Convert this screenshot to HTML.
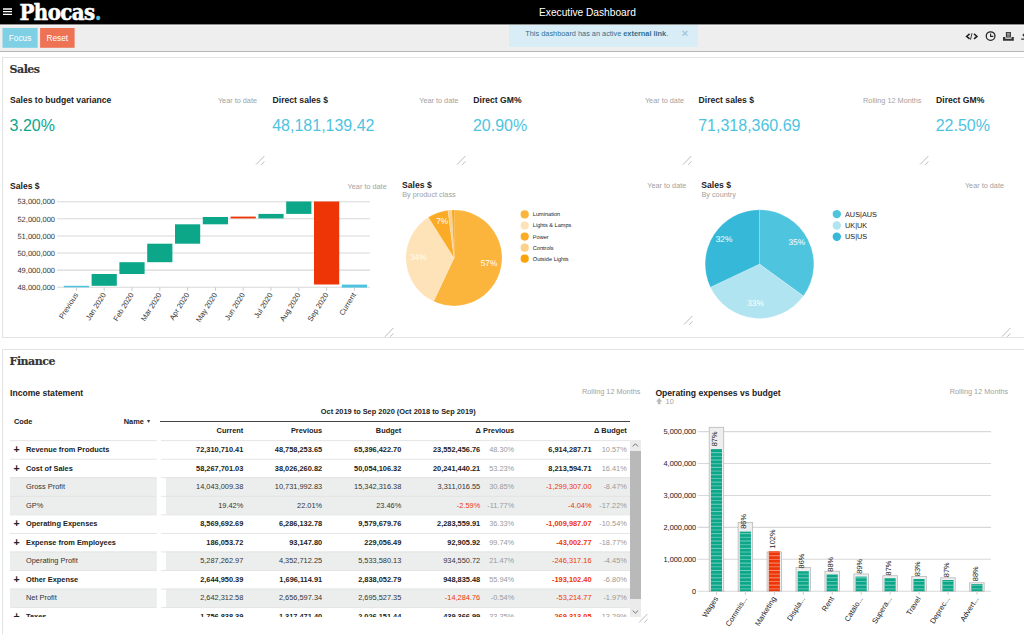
<!DOCTYPE html>
<html><head><meta charset="utf-8"><title>Executive Dashboard</title>
<style>
*{box-sizing:border-box;margin:0;padding:0}
html,body{width:1024px;height:634px;overflow:hidden;background:#fff;font-family:"Liberation Sans",sans-serif;color:#333}
.abs{position:absolute;white-space:nowrap}
#hdr{left:0;top:0;width:1024px;height:24px;background:#000}
#logo{left:19.5px;top:-4.5px;font:bold 22px "DejaVu Serif Condensed","DejaVu Serif",serif;color:#fff;letter-spacing:-0.55px;line-height:32px;font-stretch:condensed;-webkit-text-stroke:0.55px #fff}
#logo span{color:#4ec3e0;-webkit-text-stroke:0.3px #4ec3e0}
#title{left:539px;top:7px;font-size:10.2px;color:#fff}
#tb{left:0;top:24px;width:1024px;height:28px;background:#eee;border-bottom:1px solid #b5b5b5}
.btn{top:28px;height:20px;color:#fff;font-size:8.3px;line-height:20px;text-align:center}
#alert{left:509px;top:25px;width:188.7px;height:22.4px;background:#d9edf7;color:#31708f;font-size:7.35px;line-height:17px;padding-left:16.3px}
.panel{left:2px;width:1030px;border:1px solid #e2e2e2;background:#fff}
.h{font:bold 11px "DejaVu Serif",serif;color:#333;letter-spacing:-0.5px;-webkit-text-stroke:0.15px #333;line-height:14px}
.t{font-weight:bold;font-size:8.6px;color:#222;margin-left:-0.4px}
.p{font-size:7.3px;color:#a2a2a2}
.v{font-size:16px}
.sub{font-size:7.3px;color:#a2a2a2}
svg{position:absolute;overflow:visible}
svg text{font-family:"Liberation Sans",sans-serif;text-rendering:geometricPrecision}
.tbl{font-size:7.4px;color:#333}
.tbl b{color:#222}
.r{text-align:right}
.red,.red b{color:#ee3506!important}
.g{color:#999}
</style></head><body>
<div class="abs" id="hdr"></div>
<svg style="left:3px;top:8px" width="10" height="8"><path d="M0 1h9M0 3.7h9M0 6.4h9" stroke="#fff" stroke-width="1.3"/></svg>
<div class="abs" id="logo">Phocas<span>.</span></div>
<div class="abs" id="title">Executive Dashboard</div>
<div class="abs" id="tb"></div>
<div class="abs" style="left:0;top:24px;width:1024px;height:1px;background:#8e8e8e"></div><div class="abs" style="left:0;top:25px;width:1024px;height:1px;background:#f6f6f6"></div>
<svg style="left:0;top:0" width="80" height="52"><rect x="2.5" y="28" width="35.1" height="19.8" fill="#7fd0e4"/><rect x="40.1" y="28" width="34.5" height="19.8" fill="#ee7355"/></svg>
<div class="abs btn" style="left:2.5px;width:35px">Focus</div>
<div class="abs btn" style="left:40px;width:34.5px">Reset</div>
<div class="abs" id="alert">This dashboard has an active <b>external link</b>.</div>
<div class="abs" style="left:681.6px;top:26.6px;font-size:11.5px;font-weight:bold;color:#a3c8de">×</div>

<svg style="left:964px;top:31px" width="60" height="12">
<g fill="none" stroke="#222"><path d="M5.6 2.9L2.6 5.4l3 2.5M10 2.9l3 2.5-3 2.5" stroke-width="1.5"/><path d="M8 2.2L6.5 8.7" stroke-width="0.9"/></g>
<circle cx="26.6" cy="5.1" r="4.35" fill="none" stroke="#222" stroke-width="1.25"/><path d="M26.6 2.4v3h2.7" fill="none" stroke="#222" stroke-width="1.1"/>
<path d="M41.9 0.9h5v5.6h-5zM39 6.1h2.3v1.6h6.2v-1.6h2.3v3.6h-10.8z" fill="#333"/><path d="M42.9 2.3h3M42.9 3.7h3M42.9 5.1h3" stroke="#ddd" stroke-width="0.7"/>
<path d="M58.6 4a1.6 1.6 0 1 1 3.2 0a1.6 1.6 0 1 1-3.2 0M57.2 7.6h4v1.2h-4z" fill="#333"/>
</svg>

<div class="abs panel" style="top:57px;height:281px"></div>
<div class="abs panel" style="top:349px;height:300px"></div>
<div class="abs h" style="left:9.6px;top:62.5px">Sales</div>
<div class="abs h" style="left:9.6px;top:355px">Finance</div>

<div class="abs t" style="left:10.4px;top:95px">Sales to budget variance</div>
<div class="abs p" style="right:767px;top:95.8px">Year to date</div>
<div class="abs v" style="left:9.6px;top:117px;color:#0ca789">3.20%</div>
<div class="abs t" style="left:273px;top:95px">Direct sales $</div>
<div class="abs p" style="right:565.7px;top:95.8px">Year to date</div>
<div class="abs v" style="left:272.2px;top:117px;color:#4ec3e0">48,181,139.42</div>
<div class="abs t" style="left:473.7px;top:95px">Direct GM%</div>
<div class="abs p" style="right:340px;top:95.8px">Year to date</div>
<div class="abs v" style="left:472.9px;top:117px;color:#4ec3e0">20.90%</div>
<div class="abs t" style="left:699px;top:95px">Direct sales $</div>
<div class="abs p" style="right:102.5px;top:95.8px">Rolling 12 Months</div>
<div class="abs v" style="left:698.2px;top:117px;color:#4ec3e0">71,318,360.69</div>
<div class="abs t" style="left:936.5px;top:95px">Direct GM%</div>
<div class="abs v" style="left:935.7px;top:117px;color:#4ec3e0">22.50%</div>
<svg style="left:255.5px;top:155.7px" width="9" height="9"><path d="M0 8.6L8.4 0M5.2 8.8L8.4 5.4" stroke="#b4b4b4" stroke-width="0.9" fill="none"/></svg>
<svg style="left:456.8px;top:155.7px" width="9" height="9"><path d="M0 8.6L8.4 0M5.2 8.8L8.4 5.4" stroke="#b4b4b4" stroke-width="0.9" fill="none"/></svg>
<svg style="left:682.6px;top:155.7px" width="9" height="9"><path d="M0 8.6L8.4 0M5.2 8.8L8.4 5.4" stroke="#b4b4b4" stroke-width="0.9" fill="none"/></svg>
<svg style="left:920px;top:155.7px" width="9" height="9"><path d="M0 8.6L8.4 0M5.2 8.8L8.4 5.4" stroke="#b4b4b4" stroke-width="0.9" fill="none"/></svg>
<svg style="left:385.1px;top:328.2px" width="9" height="9"><path d="M0 8.6L8.4 0M5.2 8.8L8.4 5.4" stroke="#b4b4b4" stroke-width="0.9" fill="none"/></svg>
<svg style="left:684.4px;top:316px" width="9" height="9"><path d="M0 8.6L8.4 0M5.2 8.8L8.4 5.4" stroke="#b4b4b4" stroke-width="0.9" fill="none"/></svg>
<svg style="left:1002.3px;top:328.3px" width="9" height="9"><path d="M0 8.6L8.4 0M5.2 8.8L8.4 5.4" stroke="#b4b4b4" stroke-width="0.9" fill="none"/></svg>
<svg style="left:638.9px;top:614.2px" width="9" height="9"><path d="M0 8.6L8.4 0M5.2 8.8L8.4 5.4" stroke="#b4b4b4" stroke-width="0.9" fill="none"/></svg>
<div class="abs t" style="left:10.4px;top:180.8px">Sales $</div>
<div class="abs p" style="right:637.3px;top:181.9px">Year to date</div>
<div class="abs t" style="left:402.5px;top:180.3px">Sales $</div>
<div class="abs sub" style="left:402.2px;top:189.9px">By product class</div>
<div class="abs p" style="right:337.70000000000005px;top:181.4px">Year to date</div>
<div class="abs t" style="left:701.7px;top:180.3px">Sales $</div>
<div class="abs sub" style="left:701.4000000000001px;top:189.9px">By country</div>
<div class="abs p" style="right:20px;top:181.4px">Year to date</div>
<svg style="left:0;top:0" width="1024" height="634">
<path d="M57 201.70H370" stroke="#d8d8d8" stroke-width="1.05"/>
<text x="55" y="204.40" font-size="7.5" text-anchor="end" fill="#333">53,000,000</text>
<path d="M57 218.80H370" stroke="#d8d8d8" stroke-width="1.05"/>
<text x="55" y="221.50" font-size="7.5" text-anchor="end" fill="#333">52,000,000</text>
<path d="M57 235.90H370" stroke="#d8d8d8" stroke-width="1.05"/>
<text x="55" y="238.60" font-size="7.5" text-anchor="end" fill="#333">51,000,000</text>
<path d="M57 253.00H370" stroke="#d8d8d8" stroke-width="1.05"/>
<text x="55" y="255.70" font-size="7.5" text-anchor="end" fill="#333">50,000,000</text>
<path d="M57 270.10H370" stroke="#d8d8d8" stroke-width="1.05"/>
<text x="55" y="272.80" font-size="7.5" text-anchor="end" fill="#333">49,000,000</text>
<path d="M57 287.20H370" stroke="#d8d8d8" stroke-width="1.05"/>
<text x="55" y="289.90" font-size="7.5" text-anchor="end" fill="#333">48,000,000</text>
<rect x="63.80" y="285.8" width="25.2" height="1.50" fill="#4ec3e0"/>
<path d="M76.40 287.3v3.5" stroke="#ccc" stroke-width="1"/>
<text transform="translate(78.40 294.8) rotate(-58)" font-size="7.5" text-anchor="end" fill="#333">Previous</text>
<rect x="91.60" y="274" width="25.2" height="11.80" fill="#0ca789"/>
<path d="M104.20 287.3v3.5" stroke="#ccc" stroke-width="1"/>
<text transform="translate(106.20 294.8) rotate(-58)" font-size="7.5" text-anchor="end" fill="#333">Jan 2020</text>
<rect x="119.40" y="262.2" width="25.2" height="11.80" fill="#0ca789"/>
<path d="M132.00 287.3v3.5" stroke="#ccc" stroke-width="1"/>
<text transform="translate(134.00 294.8) rotate(-58)" font-size="7.5" text-anchor="end" fill="#333">Feb 2020</text>
<rect x="147.20" y="243.7" width="25.2" height="18.50" fill="#0ca789"/>
<path d="M159.80 287.3v3.5" stroke="#ccc" stroke-width="1"/>
<text transform="translate(161.80 294.8) rotate(-58)" font-size="7.5" text-anchor="end" fill="#333">Mar 2020</text>
<rect x="175.00" y="224.3" width="25.2" height="19.40" fill="#0ca789"/>
<path d="M187.60 287.3v3.5" stroke="#ccc" stroke-width="1"/>
<text transform="translate(189.60 294.8) rotate(-58)" font-size="7.5" text-anchor="end" fill="#333">Apr 2020</text>
<rect x="202.80" y="217" width="25.2" height="7.30" fill="#0ca789"/>
<path d="M215.40 287.3v3.5" stroke="#ccc" stroke-width="1"/>
<text transform="translate(217.40 294.8) rotate(-58)" font-size="7.5" text-anchor="end" fill="#333">May 2020</text>
<rect x="230.60" y="216.6" width="25.2" height="1.80" fill="#ee3506"/>
<path d="M243.20 287.3v3.5" stroke="#ccc" stroke-width="1"/>
<text transform="translate(245.20 294.8) rotate(-58)" font-size="7.5" text-anchor="end" fill="#333">Jun 2020</text>
<rect x="258.40" y="213.9" width="25.2" height="4.50" fill="#0ca789"/>
<path d="M271.00 287.3v3.5" stroke="#ccc" stroke-width="1"/>
<text transform="translate(273.00 294.8) rotate(-58)" font-size="7.5" text-anchor="end" fill="#333">Jul 2020</text>
<rect x="286.20" y="201.5" width="25.2" height="12.40" fill="#0ca789"/>
<path d="M298.80 287.3v3.5" stroke="#ccc" stroke-width="1"/>
<text transform="translate(300.80 294.8) rotate(-58)" font-size="7.5" text-anchor="end" fill="#333">Aug 2020</text>
<rect x="314.00" y="201.5" width="25.2" height="83.00" fill="#ee3506"/>
<path d="M326.60 287.3v3.5" stroke="#ccc" stroke-width="1"/>
<text transform="translate(328.60 294.8) rotate(-58)" font-size="7.5" text-anchor="end" fill="#333">Sep 2020</text>
<rect x="341.80" y="284.6" width="25.2" height="3.00" fill="#4ec3e0"/>
<path d="M354.40 287.3v3.5" stroke="#ccc" stroke-width="1"/>
<text transform="translate(356.40 294.8) rotate(-58)" font-size="7.5" text-anchor="end" fill="#333">Current</text>
</svg>
<svg style="left:0;top:0" width="1024" height="634">
<path d="M454.0 257.9L454.00 209.90A48.0 48.0 0 1 1 433.56 301.33Z" fill="#fbb53c" stroke="#fff" stroke-opacity="0.35" stroke-width="0.5"/>
<path d="M454.0 257.9L433.56 301.33A48.0 48.0 0 0 1 428.28 217.37Z" fill="#fee2b8" stroke="#fff" stroke-opacity="0.35" stroke-width="0.5"/>
<path d="M454.0 257.9L428.28 217.37A48.0 48.0 0 0 1 447.98 210.28Z" fill="#fbab26" stroke="#fff" stroke-opacity="0.35" stroke-width="0.5"/>
<path d="M454.0 257.9L447.98 210.28A48.0 48.0 0 0 1 451.89 209.95Z" fill="#fdd18b" stroke="#fff" stroke-opacity="0.35" stroke-width="0.5"/>
<path d="M454.0 257.9L451.89 209.95A48.0 48.0 0 0 1 454.00 209.90Z" fill="#fba20c" stroke="#fff" stroke-opacity="0.35" stroke-width="0.5"/>
<text x="489" y="265.5" font-size="8.3" text-anchor="middle" fill="#fff">57%</text>
<text x="418.3" y="259.9" font-size="8.3" text-anchor="middle" fill="#fff">34%</text>
<text x="442.2" y="224" font-size="8.3" text-anchor="middle" fill="#fff">7%</text>
<circle cx="524.7" cy="214.40" r="4.1" fill="#fbb53c"/><text x="532.8" y="216.40" font-size="5.6" fill="#222">Lumination</text>
<circle cx="524.7" cy="225.48" r="4.1" fill="#fee2b8"/><text x="532.8" y="227.48" font-size="5.6" fill="#222">Lights &amp; Lamps</text>
<circle cx="524.7" cy="236.56" r="4.1" fill="#fbab26"/><text x="532.8" y="238.56" font-size="5.6" fill="#222">Power</text>
<circle cx="524.7" cy="247.64" r="4.1" fill="#fdd18b"/><text x="532.8" y="249.64" font-size="5.6" fill="#222">Controls</text>
<circle cx="524.7" cy="258.72" r="4.1" fill="#fba20c"/><text x="532.8" y="260.72" font-size="5.6" fill="#222">Outside Lights</text>
</svg>
<svg style="left:0;top:0" width="1024" height="634">
<path d="M759.5 264.1L759.50 209.80A54.3 54.3 0 0 1 803.43 296.02Z" fill="#4fc4df" stroke="#fff" stroke-opacity="0.35" stroke-width="0.5"/>
<path d="M759.5 264.1L803.43 296.02A54.3 54.3 0 0 1 710.37 287.22Z" fill="#b1e4f1" stroke="#fff" stroke-opacity="0.35" stroke-width="0.5"/>
<path d="M759.5 264.1L710.37 287.22A54.3 54.3 0 0 1 759.50 209.80Z" fill="#36b9d9" stroke="#fff" stroke-opacity="0.35" stroke-width="0.5"/>
<text x="796.8" y="245.2" font-size="8.3" text-anchor="middle" fill="#fff">35%</text>
<text x="724" y="241.6" font-size="8.3" text-anchor="middle" fill="#fff">32%</text>
<text x="755.5" y="305.5" font-size="8.3" text-anchor="middle" fill="#fff">33%</text>
<circle cx="836.8" cy="214.10" r="4.2" fill="#4fc4df"/><text x="845" y="216.70" font-size="7.3" fill="#222">AUS|AUS</text>
<circle cx="836.8" cy="225.45" r="4.2" fill="#b1e4f1"/><text x="845" y="228.05" font-size="7.3" fill="#222">UK|UK</text>
<circle cx="836.8" cy="236.80" r="4.2" fill="#36b9d9"/><text x="845" y="239.40" font-size="7.3" fill="#222">US|US</text>
</svg>
<div class="abs t" style="left:10.4px;top:387.5px">Income statement</div>
<div class="abs p" style="right:383.6px;top:387.3px">Rolling 12 Months</div>
<div class="abs t" style="left:655.8px;top:387.5px">Operating expenses vs budget</div>
<svg style="left:656.2px;top:398.3px" width="7" height="7"><path d="M3.15 0L6.3 3.4H4.5V6.3H1.8V3.4H0Z" fill="#bbb"/></svg><div class="abs sub" style="left:665.6px;top:397.2px">10</div>
<div class="abs p" style="right:15.8px;top:387.3px">Rolling 12 Months</div>
<div class="abs tbl" style="left:0;top:0;width:650px;height:616.8px;overflow:hidden">
<div class="abs" style="left:14px;top:416.8px"><b>Code</b></div><div class="abs" style="left:123.7px;top:416.8px"><b>Name</b> <span style="font-size:5.6px;position:relative;top:-1px;left:1.4px">&#9662;</span></div>
<div class="abs" style="left:320.8px;top:406.6px"><b>Oct 2019 to Sep 2020 (Oct 2018 to Sep 2019)</b></div>
<div class="abs" style="left:160px;top:421px;width:470.2px;height:1px;background:#444"></div>
<div class="abs" style="right:406.7px;top:426.1px"><b>Current</b></div>
<div class="abs" style="right:327.9px;top:426.1px"><b>Previous</b></div>
<div class="abs" style="right:248.7px;top:426.1px"><b>Budget</b></div>
<div class="abs" style="right:135.79999999999995px;top:426.1px"><b>&#916; Previous</b></div>
<div class="abs" style="right:23.200000000000045px;top:426.1px"><b>&#916; Budget</b></div>
<svg style="left:0;top:0" width="650" height="634"><rect x="10" y="440.20" width="146.8" height="0.9" fill="#e2e2e2"/><rect x="161" y="440.20" width="469.2" height="0.9" fill="#e2e2e2"/><rect x="10" y="458.75" width="146.8" height="0.9" fill="#e2e2e2"/><rect x="161" y="458.75" width="469.2" height="0.9" fill="#e2e2e2"/><rect x="10" y="477.40" width="146.8" height="18.55" fill="#eceeee"/><rect x="166" y="477.40" width="464.2" height="18.55" fill="#eceeee"/><rect x="10" y="477.30" width="146.8" height="0.9" fill="#e2e2e2"/><rect x="161" y="477.30" width="469.2" height="0.9" fill="#e2e2e2"/><rect x="10" y="495.95" width="146.8" height="18.55" fill="#eceeee"/><rect x="166" y="495.95" width="464.2" height="18.55" fill="#eceeee"/><rect x="10" y="495.85" width="146.8" height="0.9" fill="#e2e2e2"/><rect x="161" y="495.85" width="469.2" height="0.9" fill="#e2e2e2"/><rect x="10" y="514.40" width="146.8" height="0.9" fill="#e2e2e2"/><rect x="161" y="514.40" width="469.2" height="0.9" fill="#e2e2e2"/><rect x="10" y="532.95" width="146.8" height="0.9" fill="#e2e2e2"/><rect x="161" y="532.95" width="469.2" height="0.9" fill="#e2e2e2"/><rect x="10" y="551.60" width="146.8" height="18.55" fill="#eceeee"/><rect x="166" y="551.60" width="464.2" height="18.55" fill="#eceeee"/><rect x="10" y="551.50" width="146.8" height="0.9" fill="#e2e2e2"/><rect x="161" y="551.50" width="469.2" height="0.9" fill="#e2e2e2"/><rect x="10" y="570.05" width="146.8" height="0.9" fill="#e2e2e2"/><rect x="161" y="570.05" width="469.2" height="0.9" fill="#e2e2e2"/><rect x="10" y="588.70" width="146.8" height="18.55" fill="#eceeee"/><rect x="166" y="588.70" width="464.2" height="18.55" fill="#eceeee"/><rect x="10" y="588.60" width="146.8" height="0.9" fill="#e2e2e2"/><rect x="161" y="588.60" width="469.2" height="0.9" fill="#e2e2e2"/><rect x="10" y="607.15" width="146.8" height="0.9" fill="#e2e2e2"/><rect x="161" y="607.15" width="469.2" height="0.9" fill="#e2e2e2"/></svg>
<div class="abs" style="left:13.5px;top:443.15px;font-size:10.5px"><b>+</b></div>
<div class="abs" style="left:26px;top:445.05px"><b>Revenue from Products</b></div>
<div class="abs" style="right:406.7px;top:445.05px"><b>72,310,710.41</b></div>
<div class="abs" style="right:327.9px;top:445.05px"><b>48,758,253.65</b></div>
<div class="abs" style="right:248.7px;top:445.05px"><b>65,396,422.70</b></div>
<div class="abs" style="right:169.8px;top:445.05px"><b>23,552,456.76</b></div>
<div class="abs" style="right:58.5px;top:445.05px"><b>6,914,287.71</b></div>
<div class="abs g" style="right:135.79999999999995px;top:445.05px">48.30%</div>
<div class="abs g" style="right:23.200000000000045px;top:445.05px">10.57%</div>
<div class="abs" style="left:13.5px;top:461.70px;font-size:10.5px"><b>+</b></div>
<div class="abs" style="left:26px;top:463.60px"><b>Cost of Sales</b></div>
<div class="abs" style="right:406.7px;top:463.60px"><b>58,267,701.03</b></div>
<div class="abs" style="right:327.9px;top:463.60px"><b>38,026,260.82</b></div>
<div class="abs" style="right:248.7px;top:463.60px"><b>50,054,106.32</b></div>
<div class="abs" style="right:169.8px;top:463.60px"><b>20,241,440.21</b></div>
<div class="abs" style="right:58.5px;top:463.60px"><b>8,213,594.71</b></div>
<div class="abs g" style="right:135.79999999999995px;top:463.60px">53.23%</div>
<div class="abs g" style="right:23.200000000000045px;top:463.60px">16.41%</div>
<div class="abs" style="left:26px;top:482.15px">Gross Profit</div>
<div class="abs" style="right:406.7px;top:482.15px">14,043,009.38</div>
<div class="abs" style="right:327.9px;top:482.15px">10,731,992.83</div>
<div class="abs" style="right:248.7px;top:482.15px">15,342,316.38</div>
<div class="abs" style="right:169.8px;top:482.15px">3,311,016.55</div>
<div class="abs red" style="right:58.5px;top:482.15px">-1,299,307.00</div>
<div class="abs g" style="right:135.79999999999995px;top:482.15px">30.85%</div>
<div class="abs g" style="right:23.200000000000045px;top:482.15px">-8.47%</div>
<div class="abs" style="left:26px;top:500.70px">GP%</div>
<div class="abs" style="right:406.7px;top:500.70px">19.42%</div>
<div class="abs" style="right:327.9px;top:500.70px">22.01%</div>
<div class="abs" style="right:248.7px;top:500.70px">23.46%</div>
<div class="abs red" style="right:169.8px;top:500.70px">-2.59%</div>
<div class="abs red" style="right:58.5px;top:500.70px">-4.04%</div>
<div class="abs g" style="right:135.79999999999995px;top:500.70px">-11.77%</div>
<div class="abs g" style="right:23.200000000000045px;top:500.70px">-17.22%</div>
<div class="abs" style="left:13.5px;top:517.35px;font-size:10.5px"><b>+</b></div>
<div class="abs" style="left:26px;top:519.25px"><b>Operating Expenses</b></div>
<div class="abs" style="right:406.7px;top:519.25px"><b>8,569,692.69</b></div>
<div class="abs" style="right:327.9px;top:519.25px"><b>6,286,132.78</b></div>
<div class="abs" style="right:248.7px;top:519.25px"><b>9,579,679.76</b></div>
<div class="abs" style="right:169.8px;top:519.25px"><b>2,283,559.91</b></div>
<div class="abs red" style="right:58.5px;top:519.25px"><b>-1,009,987.07</b></div>
<div class="abs g" style="right:135.79999999999995px;top:519.25px">36.33%</div>
<div class="abs g" style="right:23.200000000000045px;top:519.25px">-10.54%</div>
<div class="abs" style="left:13.5px;top:535.90px;font-size:10.5px"><b>+</b></div>
<div class="abs" style="left:26px;top:537.80px"><b>Expense from Employees</b></div>
<div class="abs" style="right:406.7px;top:537.80px"><b>186,053.72</b></div>
<div class="abs" style="right:327.9px;top:537.80px"><b>93,147.80</b></div>
<div class="abs" style="right:248.7px;top:537.80px"><b>229,056.49</b></div>
<div class="abs" style="right:169.8px;top:537.80px"><b>92,905.92</b></div>
<div class="abs red" style="right:58.5px;top:537.80px"><b>-43,002.77</b></div>
<div class="abs g" style="right:135.79999999999995px;top:537.80px">99.74%</div>
<div class="abs g" style="right:23.200000000000045px;top:537.80px">-18.77%</div>
<div class="abs" style="left:26px;top:556.35px">Operating Profit</div>
<div class="abs" style="right:406.7px;top:556.35px">5,287,262.97</div>
<div class="abs" style="right:327.9px;top:556.35px">4,352,712.25</div>
<div class="abs" style="right:248.7px;top:556.35px">5,533,580.13</div>
<div class="abs" style="right:169.8px;top:556.35px">934,550.72</div>
<div class="abs red" style="right:58.5px;top:556.35px">-246,317.16</div>
<div class="abs g" style="right:135.79999999999995px;top:556.35px">21.47%</div>
<div class="abs g" style="right:23.200000000000045px;top:556.35px">-4.45%</div>
<div class="abs" style="left:13.5px;top:573.00px;font-size:10.5px"><b>+</b></div>
<div class="abs" style="left:26px;top:574.90px"><b>Other Expense</b></div>
<div class="abs" style="right:406.7px;top:574.90px"><b>2,644,950.39</b></div>
<div class="abs" style="right:327.9px;top:574.90px"><b>1,696,114.91</b></div>
<div class="abs" style="right:248.7px;top:574.90px"><b>2,838,052.79</b></div>
<div class="abs" style="right:169.8px;top:574.90px"><b>948,835.48</b></div>
<div class="abs red" style="right:58.5px;top:574.90px"><b>-193,102.40</b></div>
<div class="abs g" style="right:135.79999999999995px;top:574.90px">55.94%</div>
<div class="abs g" style="right:23.200000000000045px;top:574.90px">-6.80%</div>
<div class="abs" style="left:26px;top:593.45px">Net Profit</div>
<div class="abs" style="right:406.7px;top:593.45px">2,642,312.58</div>
<div class="abs" style="right:327.9px;top:593.45px">2,656,597.34</div>
<div class="abs" style="right:248.7px;top:593.45px">2,695,527.35</div>
<div class="abs red" style="right:169.8px;top:593.45px">-14,284.76</div>
<div class="abs red" style="right:58.5px;top:593.45px">-53,214.77</div>
<div class="abs g" style="right:135.79999999999995px;top:593.45px">-0.54%</div>
<div class="abs g" style="right:23.200000000000045px;top:593.45px">-1.97%</div>
<div class="abs" style="left:13.5px;top:610.10px;font-size:10.5px"><b>+</b></div>
<div class="abs" style="left:26px;top:612.00px"><b>Taxes</b></div>
<div class="abs" style="right:406.7px;top:612.00px"><b>1,756,838.39</b></div>
<div class="abs" style="right:327.9px;top:612.00px"><b>1,317,471.40</b></div>
<div class="abs" style="right:248.7px;top:612.00px"><b>2,026,151.44</b></div>
<div class="abs" style="right:169.8px;top:612.00px"><b>439,366.99</b></div>
<div class="abs red" style="right:58.5px;top:612.00px"><b>-269,313.05</b></div>
<div class="abs g" style="right:135.79999999999995px;top:612.00px">33.35%</div>
<div class="abs g" style="right:23.200000000000045px;top:612.00px">-13.29%</div>
<div class="abs" style="left:630.2px;top:440.3px;width:10.7px;height:176.5px;background:#ebebeb"></div>
<div class="abs" style="left:630.2px;top:451.1px;width:10.7px;height:148px;background:#b9b9b9"></div>
<svg style="left:630.2px;top:440.3px" width="11" height="178"><path d="M2.7 6.5l2.7-2.7 2.7 2.7M2.7 170.5l2.7 2.7 2.7-2.7" fill="none" stroke="#555" stroke-width="0.8"/></svg>
</div>
<svg style="left:0;top:0" width="1024" height="634">
<path d="M698 591.20H991" stroke="#d8d8d8" stroke-width="1.05"/>
<text x="696.2" y="593.90" font-size="7.35" text-anchor="end" fill="#222">0</text>
<path d="M698 559.28H991" stroke="#d8d8d8" stroke-width="1.05"/>
<text x="696.2" y="561.98" font-size="7.35" text-anchor="end" fill="#222">1,000,000</text>
<path d="M698 527.36H991" stroke="#d8d8d8" stroke-width="1.05"/>
<text x="696.2" y="530.06" font-size="7.35" text-anchor="end" fill="#222">2,000,000</text>
<path d="M698 495.44H991" stroke="#d8d8d8" stroke-width="1.05"/>
<text x="696.2" y="498.14" font-size="7.35" text-anchor="end" fill="#222">3,000,000</text>
<path d="M698 463.52H991" stroke="#d8d8d8" stroke-width="1.05"/>
<text x="696.2" y="466.22" font-size="7.35" text-anchor="end" fill="#222">4,000,000</text>
<path d="M698 431.60H991" stroke="#d8d8d8" stroke-width="1.05"/>
<text x="696.2" y="434.30" font-size="7.35" text-anchor="end" fill="#222">5,000,000</text>
<rect x="709.20" y="427.3" width="14.5" height="163.90" fill="#eee" stroke="#b8b8b8" stroke-width="0.8"/>
<rect x="710.90" y="449.1" width="11.1" height="142.10" fill="#0ca789"/>
<path d="M710.90 452.70h11.1M710.90 460.06h11.1M710.90 467.42h11.1M710.90 474.78h11.1M710.90 482.14h11.1M710.90 489.50h11.1M710.90 496.86h11.1M710.90 504.22h11.1M710.90 511.58h11.1M710.90 518.94h11.1M710.90 526.30h11.1M710.90 533.66h11.1M710.90 541.02h11.1M710.90 548.38h11.1M710.90 555.74h11.1M710.90 563.10h11.1M710.90 570.46h11.1M710.90 577.82h11.1M710.90 585.18h11.1" stroke="#93d9cb" stroke-width="0.8" fill="none"/><path d="M710.90 456.38h11.1M710.90 463.74h11.1M710.90 471.10h11.1M710.90 478.46h11.1M710.90 485.82h11.1M710.90 493.18h11.1M710.90 500.54h11.1M710.90 507.90h11.1M710.90 515.26h11.1M710.90 522.62h11.1M710.90 529.98h11.1M710.90 537.34h11.1M710.90 544.70h11.1M710.90 552.06h11.1M710.90 559.42h11.1M710.90 566.78h11.1M710.90 574.14h11.1M710.90 581.50h11.1M710.90 588.86h11.1" stroke="#7acfbf" stroke-width="0.75" fill="none"/>
<text transform="translate(717.30 446.30) rotate(-90)" font-size="7.4" fill="#222">87%</text>
<path d="M716.50 591.2v3.5" stroke="#ccc" stroke-width="1"/>
<text transform="translate(718.50 598.5) rotate(-58)" font-size="7.5" text-anchor="end" fill="#222">Wages</text>
<rect x="738.14" y="522.4" width="14.5" height="68.80" fill="#eee" stroke="#b8b8b8" stroke-width="0.8"/>
<rect x="739.84" y="531.6" width="11.1" height="59.60" fill="#0ca789"/>
<path d="M739.84 533.66h11.1M739.84 541.02h11.1M739.84 548.38h11.1M739.84 555.74h11.1M739.84 563.10h11.1M739.84 570.46h11.1M739.84 577.82h11.1M739.84 585.18h11.1" stroke="#93d9cb" stroke-width="0.8" fill="none"/><path d="M739.84 537.34h11.1M739.84 544.70h11.1M739.84 552.06h11.1M739.84 559.42h11.1M739.84 566.78h11.1M739.84 574.14h11.1M739.84 581.50h11.1M739.84 588.86h11.1" stroke="#7acfbf" stroke-width="0.75" fill="none"/>
<text transform="translate(746.24 528.80) rotate(-90)" font-size="7.4" fill="#222">86%</text>
<path d="M745.44 591.2v3.5" stroke="#ccc" stroke-width="1"/>
<text transform="translate(747.44 598.5) rotate(-58)" font-size="7.5" text-anchor="end" fill="#222">Commis...</text>
<rect x="767.08" y="552" width="14.5" height="39.20" fill="#eee" stroke="#b8b8b8" stroke-width="0.8"/>
<rect x="768.78" y="551.2" width="11.1" height="40.00" fill="#ee3506"/>
<path d="M768.78 555.74h11.1M768.78 563.10h11.1M768.78 570.46h11.1M768.78 577.82h11.1M768.78 585.18h11.1" stroke="#f8ad98" stroke-width="0.8" fill="none"/><path d="M768.78 552.06h11.1M768.78 559.42h11.1M768.78 566.78h11.1M768.78 574.14h11.1M768.78 581.50h11.1M768.78 588.86h11.1" stroke="#f6977d" stroke-width="0.75" fill="none"/>
<text transform="translate(775.18 548.40) rotate(-90)" font-size="7.4" fill="#222">102%</text>
<path d="M774.38 591.2v3.5" stroke="#ccc" stroke-width="1"/>
<text transform="translate(776.38 598.5) rotate(-58)" font-size="7.5" text-anchor="end" fill="#222">Marketing</text>
<rect x="796.02" y="567.4" width="14.5" height="23.80" fill="#eee" stroke="#b8b8b8" stroke-width="0.8"/>
<rect x="797.72" y="571.2" width="11.1" height="20.00" fill="#0ca789"/>
<path d="M797.72 577.82h11.1M797.72 585.18h11.1" stroke="#93d9cb" stroke-width="0.8" fill="none"/><path d="M797.72 574.14h11.1M797.72 581.50h11.1M797.72 588.86h11.1" stroke="#7acfbf" stroke-width="0.75" fill="none"/>
<text transform="translate(804.12 568.40) rotate(-90)" font-size="7.4" fill="#222">86%</text>
<path d="M803.32 591.2v3.5" stroke="#ccc" stroke-width="1"/>
<text transform="translate(805.32 598.5) rotate(-58)" font-size="7.5" text-anchor="end" fill="#222">Displa...</text>
<rect x="824.96" y="571.2" width="14.5" height="20.00" fill="#eee" stroke="#b8b8b8" stroke-width="0.8"/>
<rect x="826.66" y="574.5" width="11.1" height="16.70" fill="#0ca789"/>
<path d="M826.66 577.82h11.1M826.66 585.18h11.1" stroke="#93d9cb" stroke-width="0.8" fill="none"/><path d="M826.66 581.50h11.1M826.66 588.86h11.1" stroke="#7acfbf" stroke-width="0.75" fill="none"/>
<text transform="translate(833.06 571.70) rotate(-90)" font-size="7.4" fill="#222">88%</text>
<path d="M832.26 591.2v3.5" stroke="#ccc" stroke-width="1"/>
<text transform="translate(834.26 598.5) rotate(-58)" font-size="7.5" text-anchor="end" fill="#222">Rent</text>
<rect x="853.90" y="574" width="14.5" height="17.20" fill="#eee" stroke="#b8b8b8" stroke-width="0.8"/>
<rect x="855.60" y="576.6" width="11.1" height="14.60" fill="#0ca789"/>
<path d="M855.60 577.82h11.1M855.60 585.18h11.1" stroke="#93d9cb" stroke-width="0.8" fill="none"/><path d="M855.60 581.50h11.1M855.60 588.86h11.1" stroke="#7acfbf" stroke-width="0.75" fill="none"/>
<text transform="translate(862.00 573.80) rotate(-90)" font-size="7.4" fill="#222">89%</text>
<path d="M861.20 591.2v3.5" stroke="#ccc" stroke-width="1"/>
<text transform="translate(863.20 598.5) rotate(-58)" font-size="7.5" text-anchor="end" fill="#222">Catalo...</text>
<rect x="882.84" y="575.7" width="14.5" height="15.50" fill="#eee" stroke="#b8b8b8" stroke-width="0.8"/>
<rect x="884.54" y="578.2" width="11.1" height="13.00" fill="#0ca789"/>
<path d="M884.54 585.18h11.1" stroke="#93d9cb" stroke-width="0.8" fill="none"/><path d="M884.54 581.50h11.1M884.54 588.86h11.1" stroke="#7acfbf" stroke-width="0.75" fill="none"/>
<text transform="translate(890.94 575.40) rotate(-90)" font-size="7.4" fill="#222">87%</text>
<path d="M890.14 591.2v3.5" stroke="#ccc" stroke-width="1"/>
<text transform="translate(892.14 598.5) rotate(-58)" font-size="7.5" text-anchor="end" fill="#222">Supera...</text>
<rect x="911.78" y="576.6" width="14.5" height="14.60" fill="#eee" stroke="#b8b8b8" stroke-width="0.8"/>
<rect x="913.48" y="579" width="11.1" height="12.20" fill="#0ca789"/>
<path d="M913.48 585.18h11.1" stroke="#93d9cb" stroke-width="0.8" fill="none"/><path d="M913.48 581.50h11.1M913.48 588.86h11.1" stroke="#7acfbf" stroke-width="0.75" fill="none"/>
<text transform="translate(919.88 576.20) rotate(-90)" font-size="7.4" fill="#222">83%</text>
<path d="M919.08 591.2v3.5" stroke="#ccc" stroke-width="1"/>
<text transform="translate(921.08 598.5) rotate(-58)" font-size="7.5" text-anchor="end" fill="#222">Travel</text>
<rect x="940.72" y="577.8" width="14.5" height="13.40" fill="#eee" stroke="#b8b8b8" stroke-width="0.8"/>
<rect x="942.42" y="580" width="11.1" height="11.20" fill="#0ca789"/>
<path d="M942.42 585.18h11.1" stroke="#93d9cb" stroke-width="0.8" fill="none"/><path d="M942.42 581.50h11.1M942.42 588.86h11.1" stroke="#7acfbf" stroke-width="0.75" fill="none"/>
<text transform="translate(948.82 577.20) rotate(-90)" font-size="7.4" fill="#222">87%</text>
<path d="M948.02 591.2v3.5" stroke="#ccc" stroke-width="1"/>
<text transform="translate(950.02 598.5) rotate(-58)" font-size="7.5" text-anchor="end" fill="#222">Deprec...</text>
<rect x="969.66" y="582.8" width="14.5" height="8.40" fill="#eee" stroke="#b8b8b8" stroke-width="0.8"/>
<rect x="971.36" y="584" width="11.1" height="7.20" fill="#0ca789"/>
<path d="M971.36 585.18h11.1" stroke="#93d9cb" stroke-width="0.8" fill="none"/><path d="M971.36 588.86h11.1" stroke="#7acfbf" stroke-width="0.75" fill="none"/>
<text transform="translate(977.76 581.20) rotate(-90)" font-size="7.4" fill="#222">88%</text>
<path d="M976.96 591.2v3.5" stroke="#ccc" stroke-width="1"/>
<text transform="translate(978.96 598.5) rotate(-58)" font-size="7.5" text-anchor="end" fill="#222">Advert...</text>
</svg>
</body></html>
